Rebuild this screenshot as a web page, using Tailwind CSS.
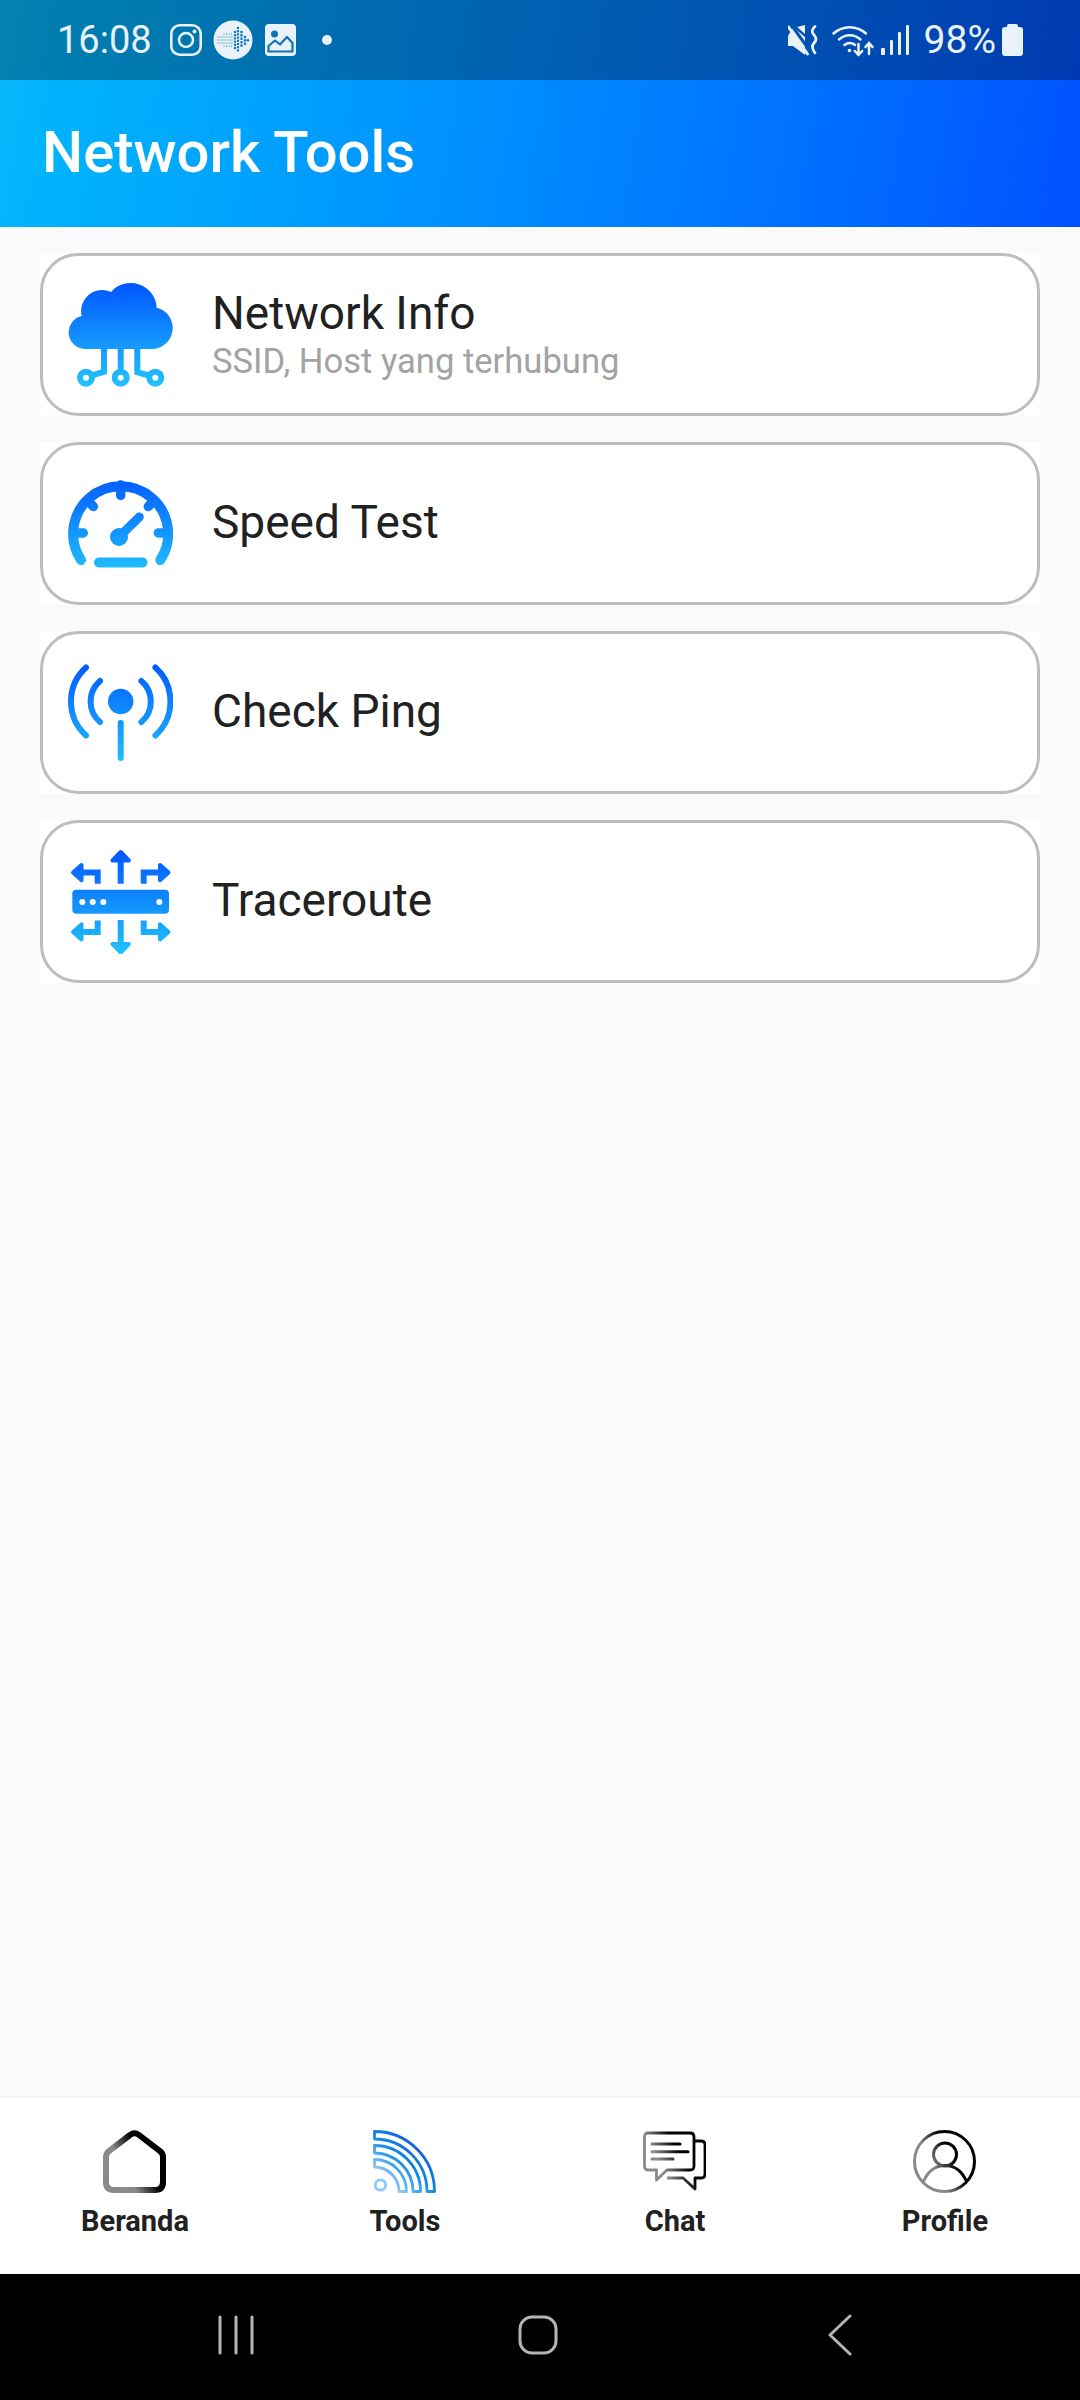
<!DOCTYPE html>
<html lang="en">
<head>
    <meta charset="UTF-8">
    <meta name="viewport" content="width=device-width, initial-scale=1.0">
    <script src="https://cdn.jsdelivr.net/npm/@tailwindcss/browser@4"></script>
    <title>Network Tools</title>
</head>
<body class="w-[1080px] h-[2400px] flex flex-col bg-[#fafafa] font-['Roboto',sans-serif] overflow-hidden">

    <!-- Gradient header with status bar -->
    <div class="bg-linear-100 from-[#0bb9fb] to-[#0050ff] shrink-0">
        <div class="h-[80px] bg-black/30 flex items-center text-[#e9f1fa] pl-[57px] pr-[57px]">
            <span class="text-[38px] leading-none w-[113px]">16:08</span>
            <svg class="w-[32px] h-[32px]" viewBox="0 0 32 32" fill="none" stroke="currentColor" stroke-width="2.6">
                <rect x="1.3" y="1.3" width="29.4" height="29.4" rx="8.5"/>
                <circle cx="16" cy="16" r="7"/>
                <circle cx="24.5" cy="7.5" r="2" fill="currentColor" stroke="none"/>
            </svg>
            <svg class="w-[40px] h-[40px] ml-[11px]" viewBox="0 0 40 40">
                <circle cx="20" cy="20" r="19.5" fill="currentColor"/>
                <g stroke="#0a76b8" stroke-linecap="round" fill="none">
                    <path d="M5 17H21M5 20H21M5 23H21" stroke-width="1" stroke-dasharray="0 2"/>
                    <path d="M11 14H21M11 26H21" stroke-width="1.2" stroke-dasharray="0 2.5"/>
                    <path d="M22 12V29M25 8V33" stroke-width="2.4" stroke-dasharray="0 3.2"/>
                    <path d="M28.5 12V29M32 17V24" stroke-width="2.6" stroke-dasharray="0 3.4"/>
                    <path d="M35 20.2V20.3" stroke-width="2.6"/>
                </g>
            </svg>
            <svg class="w-[31px] h-[32px] ml-[12px]" viewBox="0 0 31 32">
                <rect width="31" height="32" rx="4" fill="currentColor"/>
                <circle cx="9.5" cy="10" r="3.5" fill="#0a76b8"/>
                <path d="M3.500 27.500V22L10 16.500L15 20.500L22 13L27.500 19V27.500Z" fill="none" stroke="#0a76b8" stroke-width="2.2" stroke-linejoin="round"/>
            </svg>
            <span class="w-[10px] h-[10px] rounded-full bg-[#e9f1fa] ml-[26px]"></span>

            <div class="ml-auto flex items-center">
                <svg class="w-[31px] h-[32px]" viewBox="0 0 31 32" fill="none" stroke="currentColor">
                    <path d="M0 12V22H5L17 31V13L5 3Z" fill="currentColor" stroke="none"/>
                    <path d="M17 1V10L9 3Z" fill="currentColor" stroke="none"/>
                    <path d="M3 0.500L22.500 27.500" stroke-width="3" stroke="#0158b4"/>
                    <path d="M0.500 3L19.500 30" stroke-width="3" stroke-linecap="round"/>
                    <path d="M27 2.500Q22 7 26 11Q30 15 26 19Q22.500 23 27 29" stroke-width="2.800" stroke-linecap="round"/>
                </svg>
                <svg class="w-[44px] h-[34px] ml-[12px]" viewBox="0 0 44 34" fill="none" stroke="currentColor" stroke-linecap="round" stroke-width="2.5">
                    <path d="M2.500 10.500A24 24 0 0 1 35 10.500"/>
                    <path d="M8 16.500A15.500 15.500 0 0 1 29.500 16.500"/>
                    <path d="M13.500 22A8 8 0 0 1 24 22"/>
                    <circle cx="18.500" cy="27.500" r="1.800" fill="currentColor" stroke="none"/>
                    <path d="M27.500 21V32M23.800 28L27.500 32L31.200 28"/>
                    <path d="M38 31V20M34.500 24L38 20L41.500 24"/>
                </svg>
                <svg class="w-[28px] h-[30px] ml-[6px]" viewBox="0 0 28 30" fill="currentColor">
                    <rect x="0" y="23" width="4" height="7" rx="1"/>
                    <rect x="9" y="15" width="3" height="15" rx="1"/>
                    <rect x="17" y="7" width="3" height="23" rx="1"/>
                    <rect x="25" y="0" width="3" height="30" rx="1"/>
                </svg>
                <span class="text-[39px] leading-none ml-[15px]">98%</span>
                <svg class="w-[21px] h-[32px] ml-[6px]" viewBox="0 0 21 32" fill="currentColor">
                    <rect x="5" y="0" width="11" height="6" rx="2"/>
                    <rect x="0" y="3" width="21" height="29" rx="3"/>
                </svg>
            </div>
        </div>
        <div class="h-[147px] flex items-center pl-[42px] pb-[3px]">
            <h1 class="text-[58px] font-medium text-white leading-none">Network Tools</h1>
        </div>
    </div>

    <!-- Tool list -->
    <main class="flex-1 flex flex-col gap-[26px] px-[40px] pt-[26px]">

        <div class="bg-white h-[163px]">
            <div class="h-full border-[3px] border-[#bdbdbd] rounded-[38px] flex items-center pl-[25px]">
                <svg class="w-[105px] h-[105px] shrink-0" viewBox="0 0 105 105" fill="none">
                    <defs>
                        <linearGradient id="blue" gradientUnits="userSpaceOnUse" x1="0" y1="0" x2="0" y2="105">
                            <stop offset="0" stop-color="#0055ff"/>
                            <stop offset="1" stop-color="#22c4fc"/>
                        </linearGradient>
                    </defs>
                    <path fill="url(#blue)" d="M17 67A16.700 16.700 0 0 1 13.700 34A21 21 0 0 1 43 10A26 26 0 0 1 88.700 26L90 26A21 21 0 0 1 85 67Z"/>
                    <g stroke="url(#blue)" stroke-width="6">
                        <path d="M36 66V89.700L24 93.500M52.700 66V88M69.300 66V90.300L81 93.500"/>
                        <circle cx="18" cy="95.700" r="6"/>
                        <circle cx="52.700" cy="95.700" r="6"/>
                        <circle cx="87.300" cy="95.700" r="6"/>
                    </g>
                </svg>
                <div class="ml-[39px] pt-[1px]">
                    <p class="text-[46px] leading-[52px] text-[#212121]">Network Info</p>
                    <p class="text-[34.600px] leading-[44px] text-[#a3a3a3]">SSID, Host yang terhubung</p>
                </div>
            </div>
        </div>

        <div class="bg-white h-[163px]">
            <div class="h-full border-[3px] border-[#bdbdbd] rounded-[38px] flex items-center pl-[25px]">
                <svg class="w-[105px] h-[105px] shrink-0" viewBox="0 0 105 105" fill="none" stroke="url(#blue)" stroke-linecap="round">
                    <path d="M13 89A47.500 47.500 0 1 1 92.300 89" stroke-width="10"/>
                    <path d="M52.700 14V24.500M20 30L25.300 35.500M85.500 30L80.300 35.500M8 62H15.300M97.500 62H90.300" stroke-width="9.500"/>
                    <circle cx="51" cy="66" r="9" fill="url(#blue)" stroke="none"/>
                    <path d="M52 65L71.300 46" stroke-width="9"/>
                    <path d="M31 91.500H74.500" stroke-width="10"/>
                </svg>
                <p class="ml-[39px] mb-[3px] text-[46px] leading-[54px] text-[#212121]">Speed Test</p>
            </div>
        </div>

        <div class="bg-white h-[163px]">
            <div class="h-full border-[3px] border-[#bdbdbd] rounded-[38px] flex items-center pl-[25px]">
                <svg class="w-[105px] h-[105px] shrink-0" viewBox="0 0 105 105" fill="none" stroke="url(#blue)" stroke-linecap="round" stroke-width="6">
                    <path d="M18 7.500A46 46 0 0 0 18 75.500"/>
                    <path d="M87.400 7.500A46 46 0 0 1 87.400 75.500"/>
                    <path d="M32 21A27 27 0 0 0 32 62"/>
                    <path d="M73.400 21A27 27 0 0 1 73.400 62"/>
                    <circle cx="52.700" cy="41.500" r="12.700" fill="url(#blue)" stroke="none"/>
                    <path d="M52.700 63V98"/>
                </svg>
                <p class="ml-[39px] mb-[3px] text-[46px] leading-[54px] text-[#212121]">Check Ping</p>
            </div>
        </div>

        <div class="bg-white h-[163px]">
            <div class="h-full border-[3px] border-[#bdbdbd] rounded-[38px] flex items-center pl-[25px]">
                <svg class="w-[105px] h-[105px] shrink-0" viewBox="0 0 105 105" fill="url(#blue)" stroke="url(#blue)">
                    <rect x="4.300" y="40.800" width="96.700" height="24" rx="4" stroke="none"/>
                    <g fill="#fff" stroke="none">
                        <circle cx="14.300" cy="53" r="3"/>
                        <circle cx="24.700" cy="53" r="3"/>
                        <circle cx="35.300" cy="53" r="3"/>
                        <circle cx="91.300" cy="53" r="3"/>
                    </g>
                    <g fill="none" stroke-width="6">
                        <path d="M52.700 34.800V8M52.700 71V97"/>
                        <path d="M29.700 34.800V23.600H9M75.700 34.800V23.600H96"/>
                        <path d="M29.700 71.500V83H9M75.700 71.500V83H96"/>
                    </g>
                    <g stroke-width="4" stroke-linejoin="round">
                        <path d="M52.700 3L44.500 11.500H60.900Z"/>
                        <path d="M52.700 103.500L44.500 95H60.900Z"/>
                        <path d="M5 23.600L13.500 16V31.200Z"/>
                        <path d="M100.500 23.600L92 16V31.200Z"/>
                        <path d="M5 83L13.500 75.400V90.600Z"/>
                        <path d="M100.500 83L92 75.400V90.600Z"/>
                    </g>
                </svg>
                <p class="ml-[39px] mb-[3px] text-[46px] leading-[54px] text-[#212121]">Traceroute</p>
            </div>
        </div>
    </main>

    <!-- Bottom navigation -->
    <nav class="h-[176px] shrink-0 bg-white shadow-[0_-2px_0_#f4f4f4] grid grid-cols-4 pt-[32px]">
        <div class="flex flex-col items-center">
            <svg class="w-[63px] h-[63px] mr-[2px]" viewBox="0 0 63 63" fill="none" stroke="url(#dark)" stroke-width="6">
                <defs>
                    <linearGradient id="dark" gradientUnits="userSpaceOnUse" x1="4" y1="48" x2="52" y2="22">
                        <stop offset="0.35" stop-color="#8a8a8a"/>
                        <stop offset="0.75" stop-color="#000"/>
                    </linearGradient>
                </defs>
                <path d="M27 5Q31.500 1.500 36 5L57 21Q60 23.500 60 27V52Q60 60 52 60H11Q3 60 3 52V27Q3 23.500 6 21Z"/>
            </svg>
            <span class="text-[29px] font-bold leading-[34px] text-[#212121] mt-[11px]">Beranda</span>
        </div>
        <div class="flex flex-col items-center">
            <svg class="w-[63px] h-[63px] mr-[2px]" viewBox="0 0 63 63" fill="none" stroke="url(#rss)" stroke-width="2.800" stroke-linejoin="round">
                <defs>
                    <linearGradient id="rss" gradientUnits="userSpaceOnUse" x1="5" y1="58" x2="50" y2="10">
                        <stop offset="0.2" stop-color="#8cc8f8"/>
                        <stop offset="0.55" stop-color="#0b8ae8"/>
                        <stop offset="1" stop-color="#1c4fd6"/>
                    </linearGradient>
                </defs>
                <path d="M1.500 1.500A60 60 0 0 1 61.500 61.500H54A52.500 52.500 0 0 0 1.500 9Z"/>
                <path d="M1.500 15.500A46 46 0 0 1 47.500 61.500H40A38.500 38.500 0 0 0 1.500 23Z"/>
                <path d="M1.500 29.500A32 32 0 0 1 33.500 61.500H26A24.500 24.500 0 0 0 1.500 37Z"/>
                <circle cx="7.500" cy="55" r="5.200"/>
            </svg>
            <span class="text-[29px] font-bold leading-[34px] text-[#212121] mt-[11px]">Tools</span>
        </div>
        <div class="flex flex-col items-center">
            <svg class="w-[63px] h-[63px] mr-[2px]" viewBox="0 0 63 63" fill="none" stroke="url(#dark)" stroke-width="2.800" stroke-linejoin="round">
                <path d="M5 3H47Q51 3 51 7V36Q51 40 47 40H24L13.500 50V40H5Q1.500 40 1.500 36V7Q1.500 3 5 3Z"/>
                <path d="M52 11H58Q62 11 62 15V44Q62 48 58 48H52V59L40 48H24"/>
                <path d="M9 14H37M9 21.700H45M9 29H30" stroke-width="3" stroke-linecap="round"/>
            </svg>
            <span class="text-[29px] font-bold leading-[34px] text-[#212121] mt-[11px]">Chat</span>
        </div>
        <div class="flex flex-col items-center">
            <svg class="w-[63px] h-[63px] mr-[2px]" viewBox="0 0 63 63" fill="none" stroke="url(#dark)" stroke-width="3">
                <circle cx="31.500" cy="31.500" r="30"/>
                <circle cx="32" cy="24.500" r="11.500"/>
                <path d="M10.500 51.500C16 39 24 35.500 32 35.500S48 39 53.500 51.500"/>
            </svg>
            <span class="text-[29px] font-bold leading-[34px] text-[#212121] mt-[11px]">Profile</span>
        </div>
    </nav>

    <!-- Android navigation bar -->
    <div class="h-[126px] shrink-0 bg-black grid grid-cols-3 items-center text-[#b4b4b4] pl-[85px] pr-[89px] pb-[5px]">
        <svg class="w-[38px] h-[40px] justify-self-center" viewBox="0 0 38 40" fill="none" stroke="currentColor" stroke-width="3" stroke-linecap="round">
            <path d="M3 2V38M19 2V38M35 2V38"/>
        </svg>
        <svg class="w-[40px] h-[40px] justify-self-center" viewBox="0 0 40 40" fill="none" stroke="currentColor" stroke-width="3">
            <rect x="2" y="2" width="36" height="36" rx="12"/>
        </svg>
        <svg class="w-[26px] h-[42px] justify-self-center" viewBox="0 0 26 42" fill="none" stroke="currentColor" stroke-width="3" stroke-linecap="round" stroke-linejoin="round">
            <path d="M23 2L3 21L23 40"/>
        </svg>
    </div>

</body>
</html>
